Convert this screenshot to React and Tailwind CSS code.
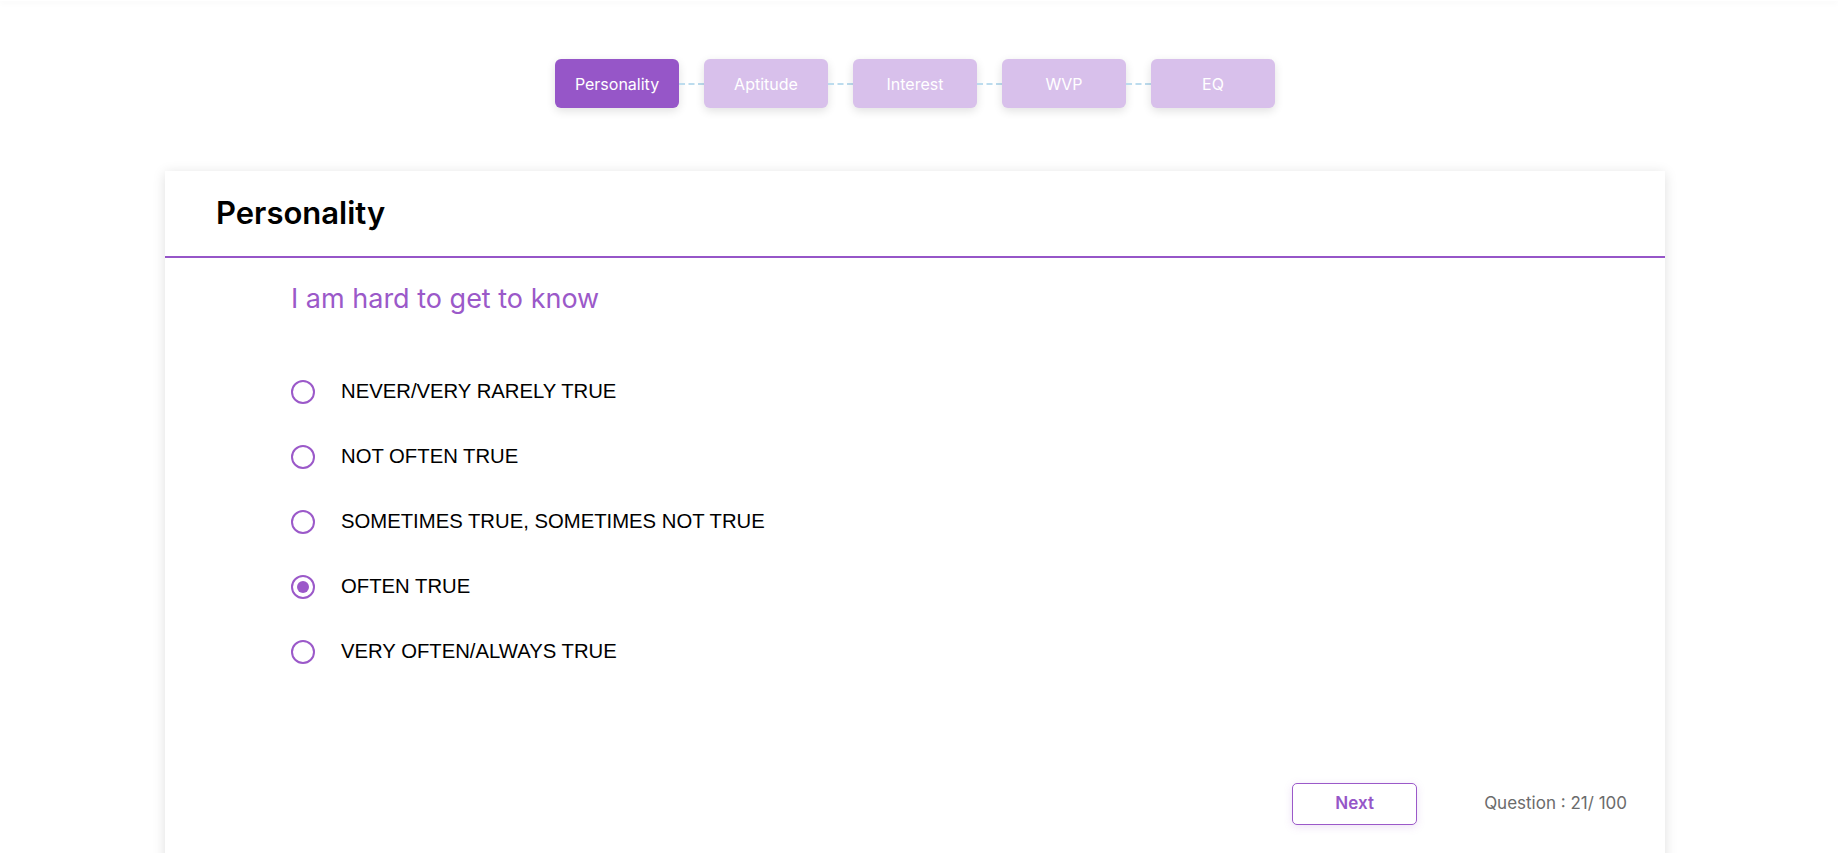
import React, { useState } from "react"

const tabs = ["Personality", "Aptitude", "Interest", "WVP", "EQ"]

const options = [
  "NEVER/VERY RARELY TRUE",
  "NOT OFTEN TRUE",
  "SOMETIMES TRUE, SOMETIMES NOT TRUE",
  "OFTEN TRUE",
  "VERY OFTEN/ALWAYS TRUE",
]

function Stepper({ active }) {
  return (
    <div className="flex items-center justify-center pt-[58px] pr-[8px]">
      {tabs.map((t, i) => (
        <React.Fragment key={t}>
          {i > 0 && (
            <div className="w-[25px] border-t-2 border-dashed border-[#bcdcee]" />
          )}
          <div
            className={
              i === active
                ? "w-[124px] h-[49px] rounded-[6px] flex items-center justify-center text-white text-[16px] bg-[#9656c8] shadow-[0_3px_10px_rgba(0,0,0,0.12)]"
                : "w-[124px] h-[49px] rounded-[6px] flex items-center justify-center text-white text-[16px] bg-[#d8c0eb] shadow-[0_3px_10px_rgba(0,0,0,0.12)]"
            }
          >
            {t}
          </div>
        </React.Fragment>
      ))}
    </div>
  )
}

export default function App() {
  const [selected, setSelected] = useState(3)

  return (
    <div className="min-h-screen bg-white overflow-hidden font-['Inter',sans-serif]">
      <div className="h-px bg-white shadow-[0_1px_6px_rgba(0,0,0,0.12)]" />
      <Stepper active={0} />

      <div className="ml-[165px] mt-[63px] w-[1500px] bg-white shadow-[0_2px_12px_rgba(0,0,0,0.13)] pb-[60px]">
        <div className="h-[87px] flex items-center pl-[51px] border-b-2 border-[#9656c8]">
          <h1 className="text-[31px] font-semibold text-black">Personality</h1>
        </div>

        <div className="pl-[126px] pr-[38px] pt-[25px]">
          <p className="text-[27px] leading-[32px] text-[#9b59c9]">I am hard to get to know</p>

          <div className="mt-[44px] flex flex-col">
            {options.map((o, i) => (
              <label
                key={o}
                onClick={() => setSelected(i)}
                className="h-[65px] flex items-center cursor-pointer"
              >
                <span className="w-[24px] h-[24px] rounded-full border-2 border-[#9b59c9] flex items-center justify-center shrink-0">
                  {selected === i && <span className="w-[12px] h-[12px] rounded-full bg-[#9b59c9]" />}
                </span>
                <span className="ml-[26px] text-[20.3px] text-black font-['Liberation_Sans',Arial,sans-serif]">
                  {o}
                </span>
              </label>
            ))}
          </div>

          <div className="mt-[99px] flex items-center justify-end">
            <button className="w-[125px] h-[42px] rounded-[5px] border border-[#9b59c9] text-[#9656c8] text-[17px] font-semibold bg-white shadow-[0_2px_8px_rgba(155,89,201,0.18)]">
              Next
            </button>
            <span className="ml-[67px] text-[17px] text-[#6b6b6b]">Question : 21/ 100</span>
          </div>
        </div>
      </div>
    </div>
  )
}
